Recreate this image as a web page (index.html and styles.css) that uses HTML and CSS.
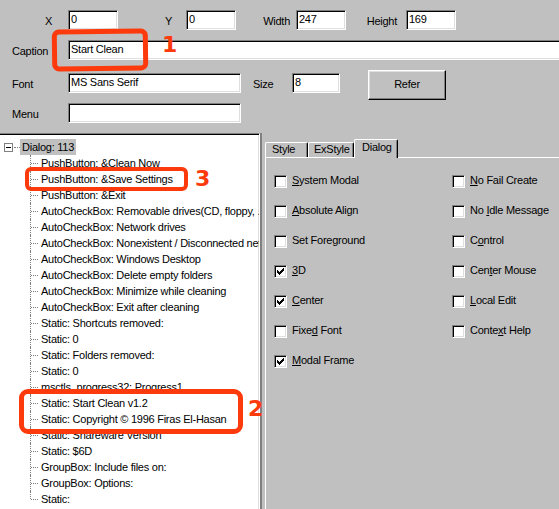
FILE: index.html
```html
<!DOCTYPE html>
<html>
<head>
<meta charset="utf-8">
<title>Dialog editor</title>
<link rel="stylesheet" href="styles.css">
</head>
<body>
<div class="props">
  <div class="row r1">
    <span class="lbl lx">X</span><div class="field w50">0</div>
    <span class="lbl ly">Y</span><div class="field w50">0</div>
    <span class="lbl lw">Width</span><div class="field w50">247</div>
    <span class="lbl lh">Height</span><div class="field w50">169</div>
  </div>
  <div class="row r2">
    <span class="lbl lleft">Caption</span><div class="field wide">Start Clean</div>
  </div>
  <div class="row r3">
    <span class="lbl lleft">Font</span><div class="field w173">MS Sans Serif</div>
    <span class="lbl lsize">Size</span><div class="field w48">8</div>
    <div class="btn">Refer</div>
  </div>
  <div class="row r4">
    <span class="lbl lleft">Menu</span><div class="field w173"></div>
  </div>
</div>

<div class="main">
  <div class="tree">
    <div class="root"><span class="exp"></span><span class="conn"></span><span class="sel">Dialog: 113</span></div>
    <ul class="kids">
      <li>PushButton: &amp;Clean Now</li>
      <li>PushButton: &amp;Save Settings</li>
      <li>PushButton: &amp;Exit</li>
      <li>AutoCheckBox: Removable drives(CD, floppy, ...)</li>
      <li>AutoCheckBox: Network drives</li>
      <li>AutoCheckBox: Nonexistent / Disconnected network drives</li>
      <li>AutoCheckBox: Windows Desktop</li>
      <li>AutoCheckBox: Delete empty folders</li>
      <li>AutoCheckBox: Minimize while cleaning</li>
      <li>AutoCheckBox: Exit after cleaning</li>
      <li>Static: Shortcuts removed:</li>
      <li>Static: 0</li>
      <li>Static: Folders removed:</li>
      <li>Static: 0</li>
      <li>msctls_progress32: Progress1</li>
      <li>Static: Start Clean v1.2</li>
      <li>Static: Copyright © 1996 Firas El-Hasan</li>
      <li>Static: Shareware Version</li>
      <li>Static: $6D</li>
      <li>GroupBox: Include files on:</li>
      <li>GroupBox: Options:</li>
      <li>Static:</li>
    </ul>
  </div>
  <div class="pane">
    <div class="tabs">
      <div class="tab t-style">Style</div>
      <div class="tab t-ex">ExStyle</div>
      <div class="tab t-dlg active">Dialog</div>
    </div>
    <div class="tabbody">
      <div class="checks">
        <div class="cb"><span class="box"></span><span class="cl"><u>S</u>ystem Modal</span></div>
        <div class="cb"><span class="box"></span><span class="cl"><u>N</u>o Fail Create</span></div>
        <div class="cb"><span class="box"></span><span class="cl"><u>A</u>bsolute Align</span></div>
        <div class="cb"><span class="box"></span><span class="cl">No <u>I</u>dle Message</span></div>
        <div class="cb"><span class="box"></span><span class="cl">Set Foreground</span></div>
        <div class="cb"><span class="box"></span><span class="cl">C<u>o</u>ntrol</span></div>
        <div class="cb"><span class="box"><svg class="chk" width="11" height="11" viewBox="0 0 11 11"><rect x="2" y="4" width="1" height="3"/><rect x="3" y="5" width="1" height="3"/><rect x="4" y="6" width="1" height="3"/><rect x="5" y="5" width="1" height="3"/><rect x="6" y="4" width="1" height="3"/><rect x="7" y="3" width="1" height="3"/><rect x="8" y="2" width="1" height="3"/></svg></span><span class="cl"><u>3</u>D</span></div>
        <div class="cb"><span class="box"></span><span class="cl">Cen<u>t</u>er Mouse</span></div>
        <div class="cb"><span class="box"><svg class="chk" width="11" height="11" viewBox="0 0 11 11"><rect x="2" y="4" width="1" height="3"/><rect x="3" y="5" width="1" height="3"/><rect x="4" y="6" width="1" height="3"/><rect x="5" y="5" width="1" height="3"/><rect x="6" y="4" width="1" height="3"/><rect x="7" y="3" width="1" height="3"/><rect x="8" y="2" width="1" height="3"/></svg></span><span class="cl"><u>C</u>enter</span></div>
        <div class="cb"><span class="box"></span><span class="cl"><u>L</u>ocal Edit</span></div>
        <div class="cb"><span class="box"></span><span class="cl">Fixe<u>d</u> Font</span></div>
        <div class="cb"><span class="box"></span><span class="cl">Conte<u>x</u>t Help</span></div>
        <div class="cb"><span class="box"><svg class="chk" width="11" height="11" viewBox="0 0 11 11"><rect x="2" y="4" width="1" height="3"/><rect x="3" y="5" width="1" height="3"/><rect x="4" y="6" width="1" height="3"/><rect x="5" y="5" width="1" height="3"/><rect x="6" y="4" width="1" height="3"/><rect x="7" y="3" width="1" height="3"/><rect x="8" y="2" width="1" height="3"/></svg></span><span class="cl"><u>M</u>odal Frame</span></div>
      </div>
    </div>
  </div>
</div>

<div class="mark m1"></div><span class="num n1">1</span>
<div class="mark m3"></div><span class="num n3">3</span>
<div class="mark m2"></div><span class="num n2">2</span>
</body>
</html>
```

FILE: styles.css
```css
* { box-sizing: border-box; }
html, body { margin: 0; padding: 0; }
body {
  width: 559px;
  height: 509px;
  overflow: hidden;
  position: relative;
  background: #c0c0c0;
  font-family: "Liberation Sans", Arial, sans-serif;
  font-size: 11px;
  letter-spacing: -0.25px;
  color: #000;
}

/* ---------- property area ---------- */
.props { height: 133px; padding-top: 10px; }
.row { display: flex; align-items: flex-start; height: 20px; white-space: nowrap; }
.r2 { margin-top: 10px; }
.r3 { margin-top: 13px; }
.r4 { margin-top: 10px; }

.lbl { display: block; height: 20px; line-height: 22px; flex: none; }
.lx { width: 68px; text-align: right; padding-right: 16px; }
.ly { width: 68px; text-align: right; padding-right: 14px; }
.lw { width: 60px; text-align: right; padding-right: 6px; }
.lh { width: 60px; text-align: right; padding-right: 9px; }
.lleft { width: 68px; padding-left: 12px; }
.lsize { width: 51px; padding-left: 12px; }

.field {
  flex: none;
  height: 20px;
  line-height: 17px;
  padding: 0 3px 0 2px;
  background: #fff;
  border-top: 1px solid #808080;
  border-left: 1px solid #808080;
  border-right: 1px solid #fff;
  border-bottom: 1px solid #fff;
  box-shadow: inset 1px 1px 0 #000, inset -1px -1px 0 #dfdfdf;
  overflow: hidden;
}
.w50 { width: 50px; }
.w48 { width: 48px; }
.w173 { width: 173px; }
.wide { width: 510px; }

.btn {
  flex: none;
  width: 78px;
  height: 30px;
  margin-left: 28px;
  margin-top: -3px;
  line-height: 27px;
  text-align: center;
  border-top: 1px solid #fff;
  border-left: 1px solid #fff;
  border-right: 1px solid #000;
  border-bottom: 1px solid #000;
  box-shadow: inset -1px -1px 0 #808080, inset 1px 1px 0 #dfdfdf;
}

/* ---------- main split ---------- */
.main { display: flex; height: 376px; }

.tree {
  flex: none;
  width: 260px;
  height: 376px;
  background: #fff;
  border-top: 1px solid #808080;
  border-right: 1px solid #fff;
  box-shadow: inset 0 1px 0 #000, inset -1px 0 0 #dfdfdf;
  padding-top: 5px;
  overflow: hidden;
  white-space: nowrap;
}
.root { display: flex; align-items: center; height: 16px; }
.exp {
  position: relative;
  flex: none;
  width: 9px;
  height: 9px;
  margin-left: 4px;
  border: 1px solid #808080;
  background: #fff;
}
.exp::after {
  content: "";
  position: absolute;
  left: 1px;
  top: 3px;
  width: 5px;
  height: 1px;
  background: #000;
}
.conn { flex: none; width: 6px; margin-left: 1px; border-top: 1px dotted #808080; }
.sel { background: #c0c0c0; line-height: 16px; padding: 0 2px 0 2px; margin-left: 0; }

.kids { list-style: none; margin: 0; padding: 0; }
.kids li {
  position: relative;
  height: 16px;
  line-height: 16px;
  padding-left: 41px;
}
.kids li::before {
  content: "";
  position: absolute;
  left: 30px;
  top: 0;
  height: 16px;
  border-left: 1px dotted #808080;
}
.kids li:last-child::before { height: 8px; }
.kids li::after {
  content: "";
  position: absolute;
  left: 31px;
  top: 8px;
  width: 7px;
  border-top: 1px dotted #808080;
}

.pane {
  flex: none;
  width: 320px;
  border-left: 2px solid #808080;
  padding: 6px 0 0 3px;
}
.tabs { display: flex; align-items: flex-end; height: 18px; }
.tab {
  flex: none;
  height: 15px;
  line-height: 13px;
  border-top: 1px solid #fff;
  border-left: 1px solid #fff;
  border-right: 1px solid #000;
  border-radius: 2px 2px 0 0;
  box-shadow: inset -1px 0 0 #808080;
  background: #c0c0c0;
}
.t-style { width: 43px; padding-left: 6px; }
.t-ex { width: 46px; padding-left: 5px; }
.t-dlg { width: 44px; padding-left: 7px; }
.tab.active {
  position: relative;
  z-index: 1;
  height: 19px;
  margin-bottom: -1px;
  line-height: 14px;
}
.tabbody {
  height: 400px;
  border-top: 1px solid #fff;
  border-left: 1px solid #fff;
  padding: 17px 0 0 8px;
}
.checks {
  display: grid;
  grid-template-columns: 178px auto;
  row-gap: 17px;
}
.cb { display: flex; align-items: flex-start; height: 13px; white-space: nowrap; }
.box {
  flex: none;
  width: 13px;
  height: 13px;
  background: #fff;
  border-top: 1px solid #808080;
  border-left: 1px solid #808080;
  border-right: 1px solid #fff;
  border-bottom: 1px solid #fff;
  box-shadow: inset 1px 1px 0 #000, inset -1px -1px 0 #dfdfdf;
}
.chk { display: block; fill: #000; shape-rendering: crispEdges; }
.cl { margin-left: 5px; line-height: 11px; }
.cl u { text-underline-offset: 1px; }

/* ---------- red annotations (overlay) ---------- */
.mark {
  position: absolute;
  border: 4px solid #fd3a0c;
  border-radius: 7px;
}
.m1 { left: 52px; top: 29px; width: 96px; height: 42px; border-width: 5px; transform: rotate(-0.8deg); }
.m3 { left: 25px; top: 167px; width: 163px; height: 24px; border-radius: 6px; }
.m2 { left: 19px; top: 389px; width: 224px; height: 45px; border-width: 5px; border-radius: 9px; }
.num {
  position: absolute;
  font-family: "DejaVu Sans", sans-serif;
  font-weight: bold;
  font-size: 22px;
  line-height: 22px;
  letter-spacing: 0;
  color: #fd3a0c;
}
.n1 { left: 162px; top: 34px; }
.n3 { left: 195px; top: 168px; }
.n2 { left: 248px; top: 398px; }
```
